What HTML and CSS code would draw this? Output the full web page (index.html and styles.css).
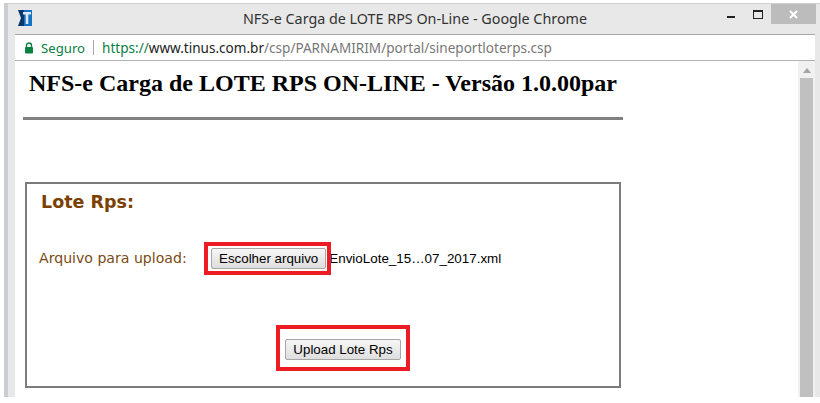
FILE: index.html
```html
<!DOCTYPE html>
<html lang="en">
<head>
    <meta charset="UTF-8">
    <title>NFS-e Carga de LOTE RPS On-Line - Google Chrome</title>
    <link rel="stylesheet" href="styles.css">
</head>
<body>
    <div class="window">
        <div class="titlebar">
            <svg class="favicon" width="14" height="16" viewBox="0 0 14 16">
                <rect x="6" width="8" height="16" fill="#1473c4"/>
                <path d="M0 0h6v16H0l3-8z" fill="#04386f"/>
                <path d="M5 2h8v2.500h-2.700V14H7.700V4.500H5z" fill="#dfeaf4"/>
            </svg>
            <div class="title">NFS-e Carga de LOTE RPS On-Line - Google Chrome</div>
            <div class="controls">
                <span class="min"></span>
                <span class="max"></span>
                <span class="close">
                    <svg width="9" height="9" viewBox="0 0 9 9"><path d="M1 1l7 7M8 1l-7 7" stroke="#fff" stroke-width="2"/></svg>
                </span>
            </div>
        </div>
        <div class="addressbar">
            <svg class="lock" width="10" height="12" viewBox="0 0 10 12">
                <path d="M2.500 5V3.500a2.500 2.500 0 0 1 5 0V5" fill="none" stroke="#0b8043" stroke-width="1.400"/>
                <rect x="1" y="5" width="8" height="6.500" rx="1" fill="#0b8043"/>
            </svg>
            <span class="secure">Seguro</span>
            <span class="sep"></span>
            <span class="url"><span class="scheme">https://</span><span class="host">www.tinus.com.br</span>/csp/PARNAMIRIM/portal/sineportloterps.csp</span>
        </div>
        <div class="viewport">
            <div class="page">
                <h2>NFS-e Carga de LOTE RPS ON-LINE - Versão 1.0.00par</h2>
                <div class="rule"></div>
                <div class="box">
                    <div class="legend">Lote Rps:</div>
                    <div class="file-row">
                        <label>Arquivo para upload:</label>
                        <span class="mark mark-file"><button class="btn">Escolher arquivo</button></span>
                        <span class="filename">EnvioLote_15…07_2017.xml</span>
                    </div>
                    <div class="submit-row">
                        <span class="mark mark-upload"><button class="btn">Upload Lote Rps</button></span>
                    </div>
                </div>
            </div>
            <div class="scrollbar">
                <svg class="arrow" width="8" height="5" viewBox="0 0 8 5"><path d="M4 0l4 5H0z" fill="#a3a3a3"/></svg>
                <div class="thumb"></div>
            </div>
        </div>
    </div>
</body>
</html>
```

FILE: styles.css
```css
html, body {
    margin: 0;
    height: 100%;
    background: #fff;
    overflow: hidden;
}
.window {
    margin: 3px 0 0 4px;
    height: 394px;
    display: flex;
    flex-direction: column;
    border-top: 1px solid #d0d0d0;
    border-left: 4px solid #c9ced2;
    background: #e8e8e8;
    box-sizing: border-box;
    font-family: "Open Sans", "Noto Sans", sans-serif;
}
.titlebar {
    height: 30px;
    flex: none;
    display: flex;
    position: relative;
    padding-left: 10px;
}
.favicon { margin-top: 6px; }
.title {
    position: absolute;
    left: 0;
    right: 0;
    top: 5px;
    text-align: center;
    padding-left: 2px;
    font-family: "Noto Sans", sans-serif;
    font-size: 14.33px;
    line-height: 20px;
    color: #333;
}
.controls {
    margin-left: auto;
    margin-right: 4px;
    display: flex;
    height: 20px;
    position: relative;
}
.min {
    width: 8px;
    height: 2px;
    background: #222;
    margin: 12px 18px 0 0;
}
.max {
    width: 8px;
    height: 6px;
    border: 1px solid #222;
    border-top-width: 2px;
    margin: 6px 8px 0 0;
}
.close {
    width: 45px;
    height: 20px;
    background: #bcbcbc;
    display: flex;
    align-items: center;
    justify-content: center;
}
.addressbar {
    height: 27px;
    flex: none;
    margin: 0 5px 0 7px;
    box-sizing: border-box;
    border-top: 1px solid #a9a9a9;
    border-bottom: 1px solid #b3b3b3;
    background: #fff;
    display: flex;
    align-items: center;
    padding-left: 9px;
    font-family: "Noto Sans", sans-serif;
    font-size: 13.55px;
    color: #777;
}
.secure {
    color: #0b8043;
    margin-left: 7px;
    font-size: 13.2px;
}
.sep {
    width: 1px;
    height: 15px;
    background: #aaa;
    margin: 0 8px 0 8px;
}
.scheme { color: #0b8043; }
.host { color: #222; }
.viewport {
    flex: 1;
    min-height: 0;
    margin: 0 5px 0 7px;
    background: #fff;
    display: flex;
}
.page {
    flex: 1;
    padding: 0 0 0 8px;
    min-width: 0;
}
h2 {
    margin: 8px 0 0;
    padding-left: 6px;
    font-family: "Liberation Serif", serif;
    font-size: 24px;
    line-height: 28px;
    font-weight: bold;
    color: #000;
    white-space: nowrap;
}
.rule {
    width: 600px;
    height: 3px;
    margin-top: 20px;
    background: #808080;
}
.box {
    width: 592px;
    height: 202px;
    margin: 62px 0 0 2px;
    border: 2px solid #7c7c7c;
    position: relative;
}
.legend {
    margin: 7px 0 0 14px;
    font-family: "DejaVu Sans", sans-serif;
    font-size: 17.5px;
    line-height: 22px;
    font-weight: bold;
    color: #7b3f00;
}
.file-row {
    margin: 35px 0 0 12px;
    display: flex;
    align-items: center;
    height: 20px;
}
label {
    width: 172px;
    font-family: "DejaVu Sans", sans-serif;
    font-size: 14.1px;
    color: #7b4a12;
}
.btn {
    font-family: "Liberation Sans", sans-serif;
    font-size: 13.33px;
    line-height: 15px;
    height: 21px;
    padding: 0 7px;
    color: #000;
    background: linear-gradient(#f6f6f6, #dedede);
    border: 1px solid #a6a6a6;
    border-radius: 2px;
    white-space: nowrap;
}
.filename {
    margin-left: 3px;
    font-family: "Liberation Sans", sans-serif;
    font-size: 13.4px;
    color: #000;
}
/* red annotation boxes drawn over the screenshot */
.mark { position: relative; display: inline-flex; }
.mark::after {
    content: "";
    position: absolute;
    border: 4px solid #ed1c24;
}
.mark-file::after { inset: -6px -5px -6px -7px; }
.mark-upload::after { inset: -14px -9px -11px -9px; }
.submit-row {
    margin-top: 71px;
    display: flex;
    justify-content: center;
    padding-left: 40px;
    height: 21px;
}
.scrollbar {
    width: 17px;
    flex: none;
    background: #f1f1f1;
    display: flex;
    flex-direction: column;
    align-items: center;
}
.arrow { margin-top: 7px; flex: none; }
.thumb {
    width: 13px;
    flex: 1;
    margin-top: 5px;
    background: #c0c0c0;
}
```
